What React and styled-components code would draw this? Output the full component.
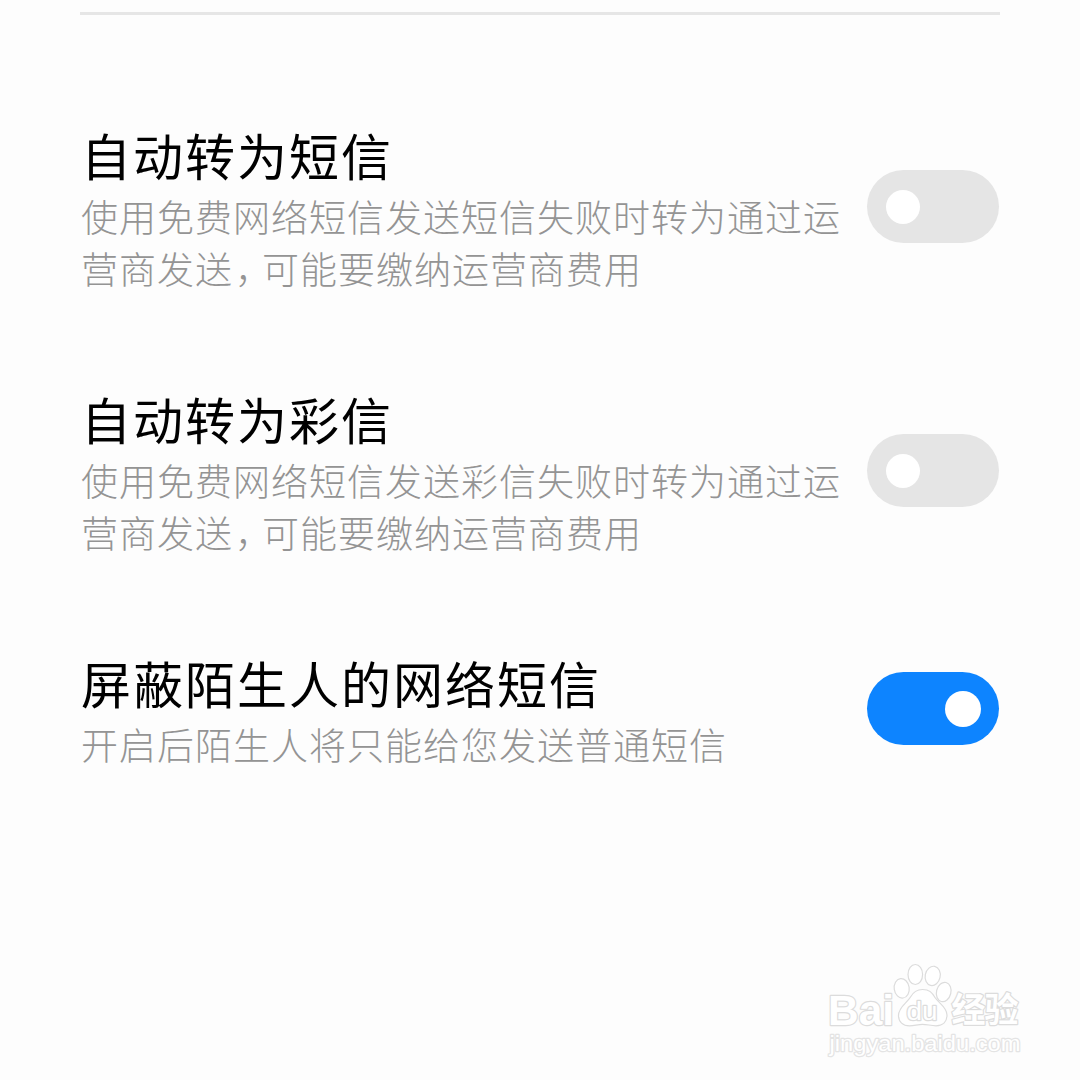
import React from 'react';
import styled, { createGlobalStyle } from 'styled-components';

const settings = [
  {
    title: '自动转为短信',
    lines: ['使用免费网络短信发送短信失败时转为通过运', '营商发送，可能要缴纳运营商费用'],
    on: false,
  },
  {
    title: '自动转为彩信',
    lines: ['使用免费网络短信发送彩信失败时转为通过运', '营商发送，可能要缴纳运营商费用'],
    on: false,
  },
  {
    title: '屏蔽陌生人的网络短信',
    lines: ['开启后陌生人将只能给您发送普通短信'],
    on: true,
  },
];

// the full-width comma is set tighter than the other characters
const tighten = line =>
  line.split('，').map((part, i) => (
    <React.Fragment key={i}>
      {i > 0 && <Comma>，</Comma>}
      {part}
    </React.Fragment>
  ));

const SettingRow = ({ title, lines, on }) => {
  return (
    <Row>
      <Info>
        <Title>{title}</Title>
        {lines.map(line => (
          <Descrip key={line}>{tighten(line)}</Descrip>
        ))}
      </Info>
      <Switch type="button" role="switch" aria-checked={on} aria-label={title} $on={on}>
        <Knob $on={on} />
      </Switch>
    </Row>
  );
};

const Watermark = () => {
  return (
    <Mark width="210" height="110" viewBox="0 0 210 110">
      <Paw>
        <ellipse cx="81.7" cy="33.3" rx="7.5" ry="9.8" transform="rotate(-8 81.7 33.3)" />
        <ellipse cx="95.3" cy="19.5" rx="7.3" ry="10" />
        <ellipse cx="112.7" cy="20.9" rx="7.5" ry="9.7" transform="rotate(12 112.7 20.9)" />
        <ellipse cx="123.7" cy="37" rx="7.2" ry="9.8" transform="rotate(14 123.7 37)" />
        <path d="M102.500 34.500C96 34.500 93 37.500 90.500 42C87 48 78.500 52 78.500 60.500C78.500 67 83 70.800 89.500 70.800C94 70.800 98 69.300 102.500 69.300C107 69.300 111 70.800 116 70.800C123 70.800 127 66.500 127 60C127 52 118.500 48 115 42.500C112 37.500 109.500 34.500 102.500 34.500Z" />
      </Paw>
      <MarkText x="8" y="69.5" $size={43} $weight={700} textLength="66" lengthAdjust="spacingAndGlyphs">
        Bai
      </MarkText>
      <MarkText x="86.5" y="64.5" $size={26} $weight={400} textLength="31" lengthAdjust="spacingAndGlyphs">
        du
      </MarkText>
      <MarkText x="131.5" y="67" $size={34} $weight={700} textLength="67">
        经验
      </MarkText>
      <MarkText x="9.5" y="95.5" $size={22} $weight={400} $light textLength="191" lengthAdjust="spacingAndGlyphs">
        jingyan.baidu.com
      </MarkText>
    </Mark>
  );
};

const App = () => {
  return (
    <>
      <GlobalStyle />
      <Page>
        <Divider />
        <List>
          {settings.map(item => (
            <SettingRow key={item.title} {...item} />
          ))}
        </List>
        <Watermark />
      </Page>
    </>
  );
};

export default App;

const GlobalStyle = createGlobalStyle`
  * {
    box-sizing: border-box;
  }

  body {
    margin: 0;
    background: #fdfdfd;
    font-family: 'Noto Sans CJK SC', sans-serif;
  }
`;

const Page = styled.main`
  position: relative;
  height: 1080px;
  padding: 12px 80px 0;
  overflow: hidden;
  background: #fdfdfd;
`;

const Divider = styled.hr`
  height: 3px;
  margin: 0;
  border: none;
  background: #e6e6e6;
`;

const List = styled.div`
  display: flex;
  flex-direction: column;
  gap: 87px;
  padding-top: 103px;
`;

const Row = styled.section`
  display: flex;
  align-items: center;
  justify-content: space-between;
`;

const Info = styled.div`
  padding: 0 0 1px 1px;
  white-space: nowrap;
`;

const Title = styled.h2`
  margin: 0;
  padding: 2px 0 3px;
  font-size: 50px;
  font-weight: 400;
  line-height: 68px;
  letter-spacing: 2px;
  color: #000;
`;

const Descrip = styled.p`
  margin: 0;
  font-size: 37px;
  font-weight: 300;
  line-height: 51.5px;
  letter-spacing: 1px;
  color: #949494;
`;

const Comma = styled.span`
  margin-left: 2px;
  letter-spacing: -10px;
`;

const Switch = styled.button`
  display: flex;
  flex: none;
  align-items: center;
  justify-content: ${props => (props.$on ? 'flex-end' : 'flex-start')};
  width: 132px;
  height: 73px;
  margin-right: 1px;
  padding: 0 18px 0 19px;
  border: none;
  border-radius: 37px;
  background: ${props => (props.$on ? '#0d84ff' : '#e5e5e5')};
`;

const Knob = styled.span`
  width: ${props => (props.$on ? 36 : 34)}px;
  height: ${props => (props.$on ? 36 : 34)}px;
  border-radius: 50%;
  background: #fff;
`;

const Mark = styled.svg`
  position: absolute;
  left: 820px;
  top: 955px;
`;

const Paw = styled.g`
  fill: #fff;
  stroke: #dcdcdc;
  stroke-width: 1.2px;
`;

const MarkText = styled.text`
  font-family: 'Liberation Sans', 'Noto Sans CJK SC', sans-serif;
  font-size: ${props => props.$size}px;
  font-weight: ${props => props.$weight};
  fill: #fff;
  stroke: ${props => (props.$light ? '#e4e4e4' : '#dcdcdc')};
  stroke-width: 2.4px;
  stroke-linejoin: round;
  paint-order: stroke;
`;
